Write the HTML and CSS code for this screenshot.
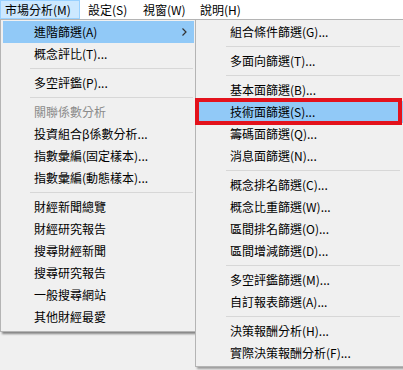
FILE: index.html
```html
<!DOCTYPE html>
<html lang="zh-Hant">
<head>
<meta charset="utf-8">
<link rel="stylesheet" href="styles.css">
</head>
<body>
<div class="menubar">
  <div class="top-item active w-market">市場分析(M)</div>
  <div class="top-item w-settings">設定(S)</div>
  <div class="top-item w-window">視窗(W)</div>
  <div class="top-item">說明(H)</div>
</div>

<div class="dropdown main-menu">
  <div class="item hl">進階篩選(A)
    <svg class="arrow" width="5" height="8" viewBox="0 0 5 8"><path d="M0.5 0.5 L4 4 L0.5 7.5" fill="none" stroke="#333" stroke-width="1.2"/></svg>
  </div>
  <div class="item">概念評比(T)...</div>
  <div class="sep"></div>
  <div class="item">多空評鑑(P)...</div>
  <div class="sep"></div>
  <div class="item disabled">關聯係數分析</div>
  <div class="item">投資組合β係數分析...</div>
  <div class="item">指數彙編(固定樣本)...</div>
  <div class="item">指數彙編(動態樣本)...</div>
  <div class="sep"></div>
  <div class="item">財經新聞總覽</div>
  <div class="item">財經研究報告</div>
  <div class="item">搜尋財經新聞</div>
  <div class="item">搜尋研究報告</div>
  <div class="item">一般搜尋網站</div>
  <div class="item">其他財經最愛</div>
</div>

<div class="dropdown sub-menu">
  <div class="item">組合條件篩選(G)...</div>
  <div class="sep"></div>
  <div class="item">多面向篩選(T)...</div>
  <div class="sep"></div>
  <div class="item">基本面篩選(B)...</div>
  <div class="item hl">技術面篩選(S)...</div>
  <div class="item">籌碼面篩選(Q)...</div>
  <div class="item">消息面篩選(N)...</div>
  <div class="sep"></div>
  <div class="item">概念排名篩選(C)...</div>
  <div class="item">概念比重篩選(W)...</div>
  <div class="item">區間排名篩選(O)...</div>
  <div class="item">區間增減篩選(D)...</div>
  <div class="sep"></div>
  <div class="item">多空評鑑篩選(M)...</div>
  <div class="item">自訂報表篩選(A)...</div>
  <div class="sep"></div>
  <div class="item">決策報酬分析(H)...</div>
  <div class="item">實際決策報酬分析(F)...</div>
</div>

<div class="callout"></div>
</body>
</html>
```

FILE: styles.css
```css
html, body {
  margin: 0;
  padding: 0;
}
body {
  width: 403px;
  height: 370px;
  overflow: hidden;
  position: relative;
  background: #f0f0f0;
  font-family: "Noto Sans CJK TC", "Noto Sans", sans-serif;
  font-size: 12px;
  color: #000;
}
.menubar {
  display: flex;
  height: 19px;
  background: #ffffff;
}
.top-item {
  height: 19px;
  line-height: 18px;
  padding: 0 0 0 7px;
  box-sizing: border-box;
  border: 1px solid transparent;
  white-space: nowrap;
  flex: none;
}
.top-item.active {
  background: #cce8ff;
  border-color: #99d1ff;
  padding-left: 4px;
}
.w-market { width: 80px; }
.w-settings { width: 55px; }
.w-window { width: 57px; }
.dropdown {
  position: absolute;
  top: 19px;
  background: #f0f0f0;
  border: 1px solid #b4b4b4;
  padding: 1px 2px;
  box-sizing: border-box;
}
.main-menu {
  left: 0;
  width: 197px;
  height: 313px;
  box-shadow: 2px 2px 2px rgba(0, 0, 0, 0.45);
}
.sub-menu {
  left: 195px;
  width: 212px;
  height: 348px;
  box-shadow: 2px 2px 2px rgba(0, 0, 0, 0.35);
}
.item {
  position: relative;
  height: 22px;
  line-height: 22px;
  white-space: nowrap;
}
.main-menu .item {
  padding-left: 31px;
}
.sub-menu .item {
  padding-left: 32px;
}
.item.hl {
  background: #91c9f7;
}
.item.disabled {
  color: #8a8a8a;
}
.arrow {
  position: absolute;
  right: 7px;
  top: 7px;
}
.sep {
  height: 1px;
  background: #d7d7d7;
  margin: 3px 1px 3px 27px;
}
.sub-menu .sep {
  margin-left: 28px;
  margin-right: 4px;
}
.callout {
  position: absolute;
  left: 195px;
  top: 98px;
  width: 207px;
  height: 27px;
  border: 4px solid #e3121c;
  box-sizing: border-box;
}
```
